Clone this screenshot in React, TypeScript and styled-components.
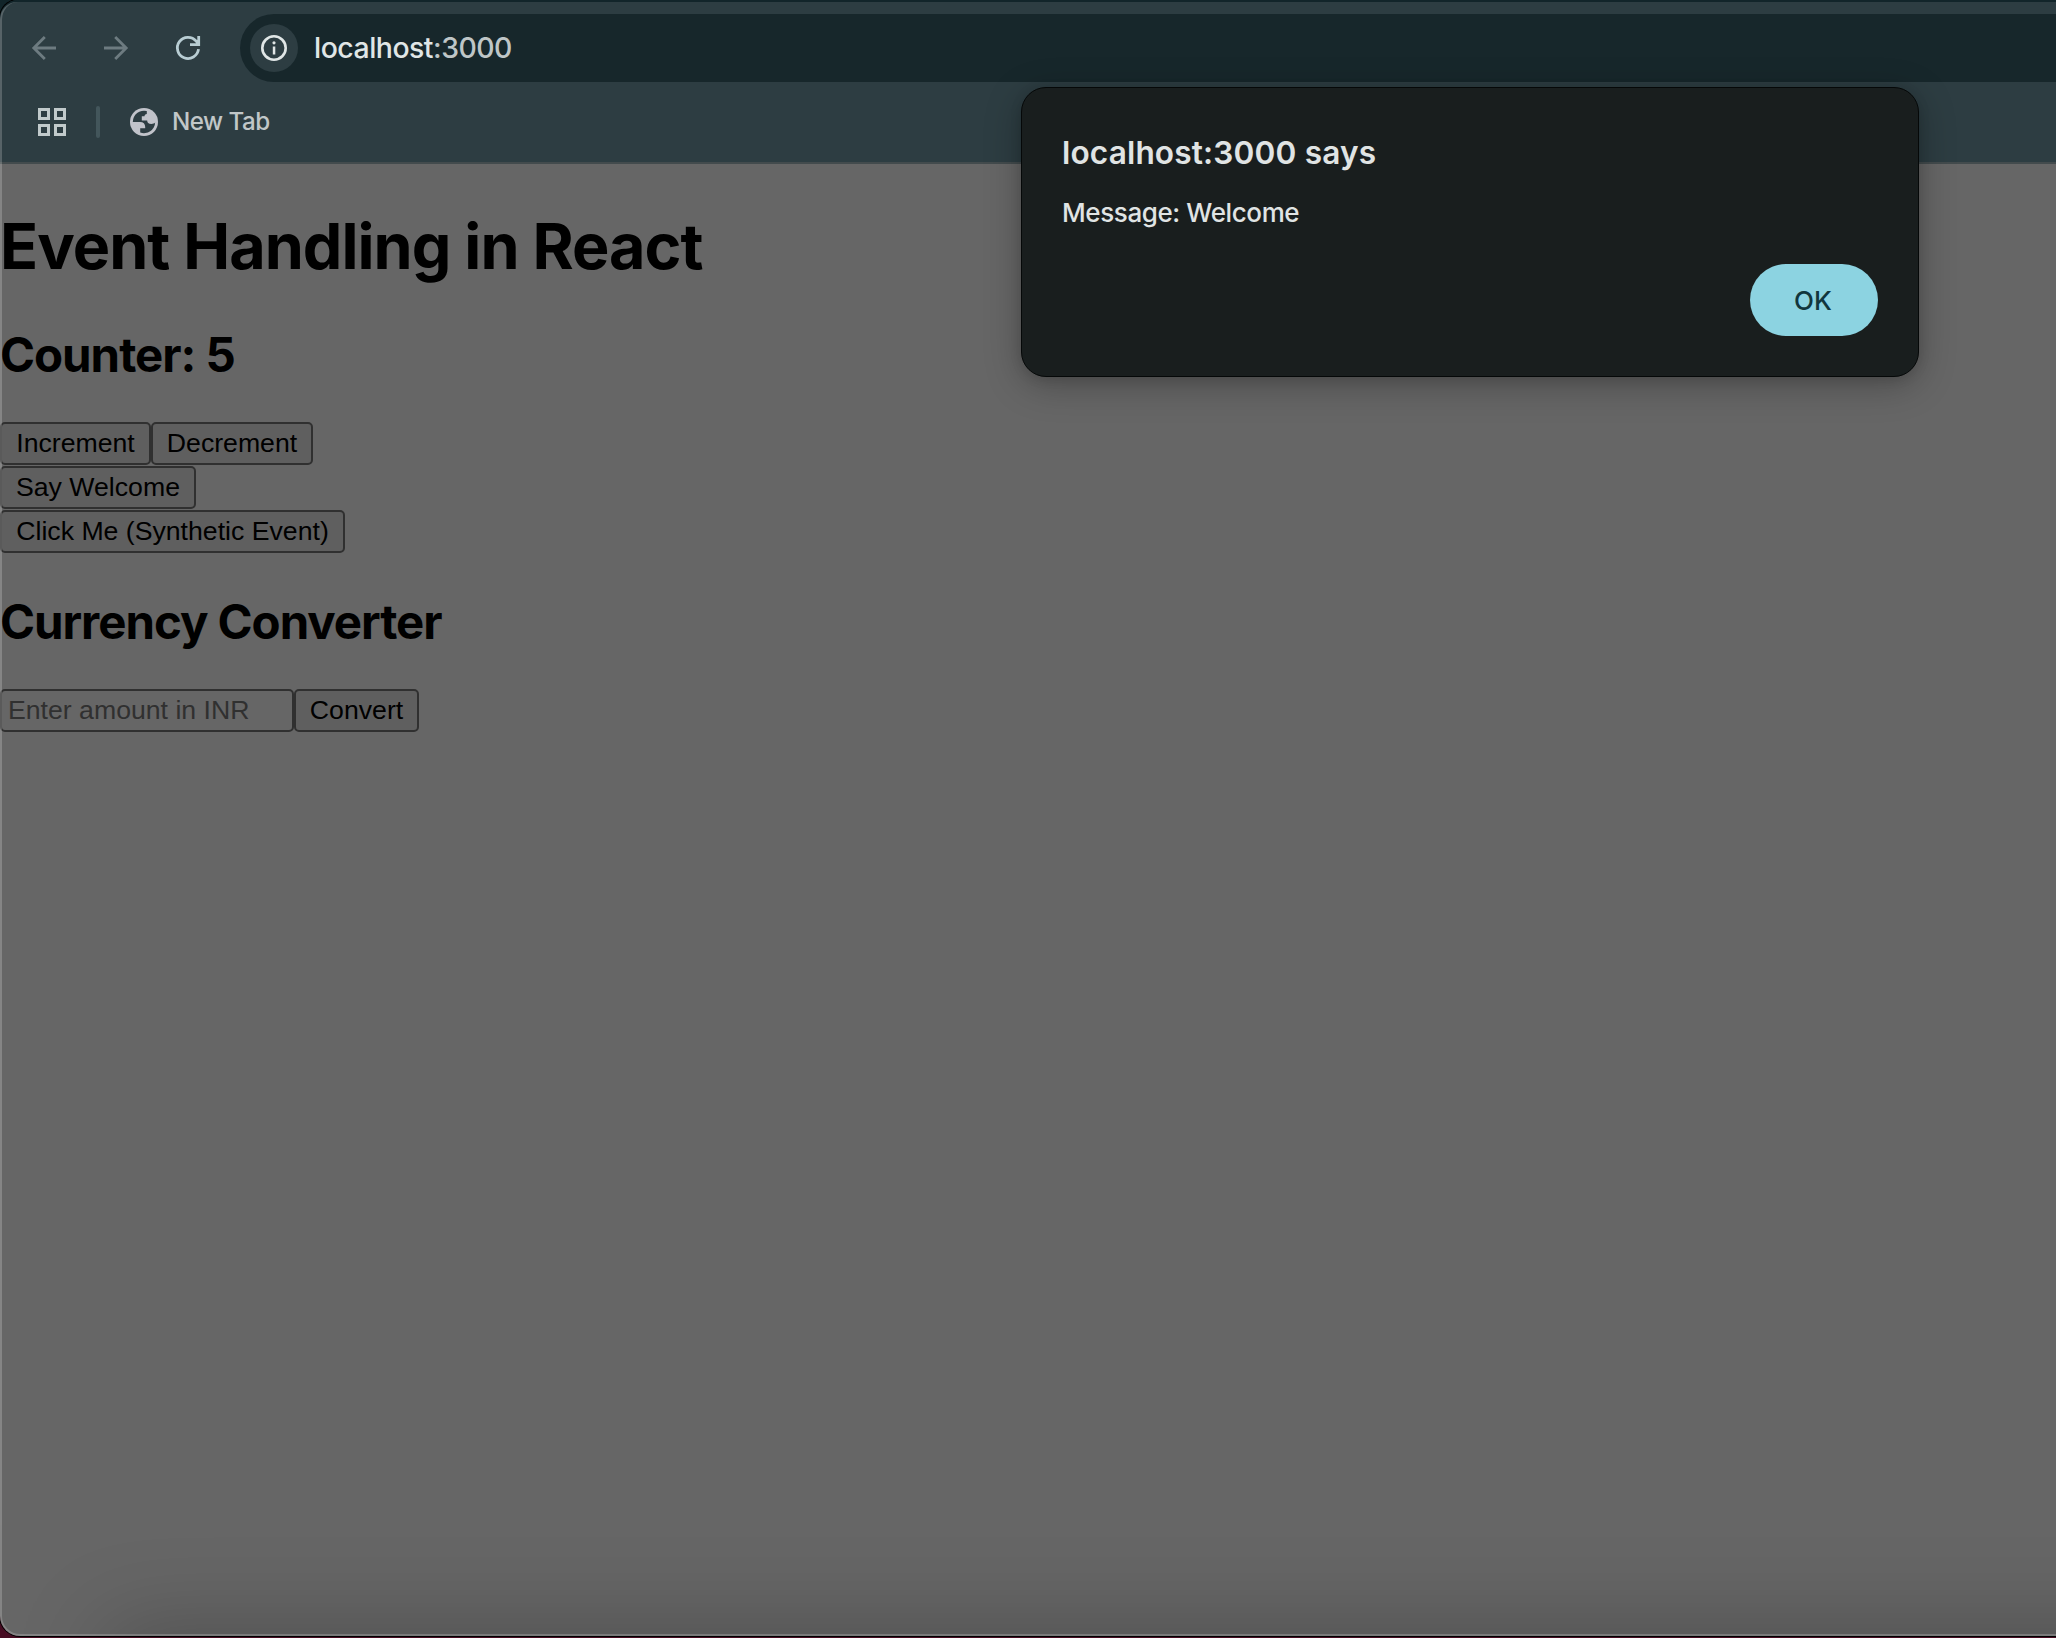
import React from "react";
import styled, { createGlobalStyle } from "styled-components";

const Global = createGlobalStyle`
  * { box-sizing: border-box; }
  html, body { margin: 0; padding: 0; background: #470c22; overflow: hidden; }
  button, input { appearance: none; margin: 0; }
`;

const Desktop = styled.div`
  position: relative;
  width: 2056px;
  height: 1638px;
  overflow: hidden;
  background: linear-gradient(#12252a 0 50%, #470c22 50%);
`;

const Window = styled.div`
  position: relative;
  display: flex;
  flex-direction: column;
  width: 100%;
  height: 1636px;
  padding-top: 2px;
  border-radius: 18px 0 0 20px;
  overflow: hidden;
  background: linear-gradient(#12252a 0 2px, transparent 2px);
  box-shadow: 0 0 0 1px #000;
`;

const WindowEdge = styled.div`
  position: absolute;
  inset: 2px -4px 0 0;
  border: 2px solid rgba(255, 255, 255, 0.2);
  border-top: 0;
  border-radius: 18px 0 0 20px;
  pointer-events: none;
`;

const Chrome = styled.header`
  height: 162px;
  background: #2d3d42;
  border-bottom: 2px solid #434b4d;
  border-top-left-radius: 16px;
  font-family: Inter, "Noto Sans", sans-serif;
`;

const Toolbar = styled.div`
  display: flex;
  align-items: center;
  height: 92px;
  padding-left: 32px;
`;

const NavIcon = styled.svg<{ $color: string; $gap: number }>`
  flex: none;
  width: 24px;
  height: 24px;
  margin-right: ${(p) => p.$gap}px;
  overflow: visible;
  fill: none;
  stroke: ${(p) => p.$color};
  stroke-width: 2.8;
`;

const AddressBar = styled.div`
  display: flex;
  align-items: center;
  flex: 1;
  height: 68px;
  padding-left: 10px;
  border-radius: 34px 0 0 34px;
  background: #17272b;
`;

const SiteInfo = styled.span`
  display: grid;
  place-items: center;
  width: 48px;
  height: 48px;
  border-radius: 50%;
  background: #2d3d42;
`;

const Url = styled.span`
  margin: 0 0 1px 16px;
  font-size: 28.4px;
  font-weight: 450;
  letter-spacing: -0.49px;
  color: #e0e6e6;
`;

const Port = styled.span`
  color: #bfc6c7;
`;

const Bookmarks = styled.nav`
  display: flex;
  align-items: center;
  height: 56px;
  padding-left: 38px;
`;

const Divider = styled.span`
  width: 4px;
  height: 32px;
  margin: 0 30px;
  border-radius: 2px;
  background: #43565b;
`;

const Bookmark = styled.span`
  display: flex;
  align-items: center;
  gap: 14px;
  font-size: 24.2px;
  font-weight: 450;
  letter-spacing: -0.5px;
  color: #c1c7c8;
`;

const BookmarkName = styled.span`
  padding-bottom: 1px;
`;

const Page = styled.main`
  position: relative;
  flex: 1;
  background: #666;
  font-family: Inter, "Liberation Sans", sans-serif;
  color: #000;
`;

const FloorShade = styled.div`
  position: absolute;
  right: -120px;
  bottom: -76px;
  left: 130px;
  height: 60px;
  box-shadow: 0 0 90px 24px rgba(0, 0, 0, 0.22);
`;

const Title = styled.h1`
  height: 74px;
  margin: 45px 0 0;
  font-size: 62.8px;
  line-height: 74px;
  font-weight: 700;
  letter-spacing: -0.96px;
`;

const Heading = styled.h2<{ $top: number; $track: number }>`
  height: 56px;
  margin: ${(p) => p.$top}px 0 39px;
  font-size: 47.4px;
  line-height: 56px;
  font-weight: 700;
  letter-spacing: ${(p) => p.$track}px;
`;

const Row = styled.div`
  display: flex;
  height: 44px;
`;

const Button = styled.button<{ $width: number }>`
  width: ${(p) => p.$width}px;
  height: 43px;
  padding: 0;
  border: 2px solid #303030;
  border-radius: 5px;
  background: #5f5f5f;
  color: #000;
  font: 26.67px "Liberation Sans", sans-serif;
  white-space: nowrap;
`;

const Amount = styled.input`
  width: 294px;
  height: 43px;
  padding: 0 0 0 6px;
  border: 2px solid #303030;
  border-radius: 5px;
  background: #666;
  font: 26.67px "Liberation Sans", sans-serif;
  &::placeholder { color: #303030; opacity: 1; }
`;

const Dialog = styled.section`
  position: absolute;
  top: 87px;
  left: 1021px;
  display: flex;
  flex-direction: column;
  width: 898px;
  height: 290px;
  padding: 45px 40px 40px;
  border: 1px solid #050808;
  border-radius: 25px;
  background: #191e1e;
  box-shadow: 0 8px 36px rgba(0, 0, 0, 0.28), 0 2px 12px rgba(0, 0, 0, 0.12);
  font-family: Inter, "Noto Sans", sans-serif;
  color: #e0e4e4;
`;

const DialogTitle = styled.div`
  height: 40px;
  font-size: 31.6px;
  line-height: 40px;
  font-weight: 600;
  letter-spacing: 0.15px;
`;

const DialogText = styled.p`
  height: 40px;
  margin: 20px 0 0;
  font-size: 26px;
  line-height: 40px;
  font-weight: 450;
  letter-spacing: -0.4px;
`;

const Confirm = styled.button`
  align-self: flex-end;
  width: 128px;
  height: 72px;
  margin-top: auto;
  padding: 0 2px 0 0;
  border: 0;
  border-radius: 36px;
  background: #8cd3e1;
  color: #11363d;
  font: 550 26px Inter, sans-serif;
`;

function InfoGlyph() {
  return (
    <svg width="26" height="26" viewBox="0 0 26 26">
      <circle cx="13" cy="13" r="11.7" fill="none" stroke="#e0e6e6" strokeWidth="2.6" />
      <circle cx="13" cy="7.8" r="1.6" fill="#e0e6e6" />
      <rect x="11.8" y="11.5" width="2.5" height="8" fill="#e0e6e6" />
    </svg>
  );
}

function AppsGlyph() {
  return (
    <svg width="28" height="28" viewBox="0 0 28 28" fill="none" stroke="#c1cacb" strokeWidth="3">
      <path d="M1.500 1.500h9v9h-9zM17.500 1.500h9v9h-9zM1.500 17.500h9v9h-9zM17.500 17.500h9v9h-9z" />
    </svg>
  );
}

function GlobeGlyph() {
  return (
    <svg width="28" height="28" viewBox="0 0 28 28">
      <circle cx="14" cy="14" r="14" fill="#c1c3ca" />
      <path
        fill="#2d3d42"
        d="M16.800 3.100A11.200 11.200 0 0 0 2.800 14H10c3.400 0 5.200 1.900 5.200 5v1.200h-5v4.300A11.200 11.200 0 0 0 25.200 14.600c-.9 1-2.200 1.300-3.800 1.300-3 0-4.200-1.200-4.200-3.400h-5.400V8.300h2.700c0-1.500.8-2.400 2.300-2.400z"
      />
    </svg>
  );
}

export default function App() {
  return (
    <Desktop>
      <Global />
      <Window>
        <Chrome>
          <Toolbar>
            <NavIcon viewBox="0 0 24 24" $color="#6d7b80" $gap={48}>
              <path d="M24 12H2M12.800 1L1.800 12l11 11" />
            </NavIcon>
            <NavIcon viewBox="0 0 24 24" $color="#6d7b80" $gap={48}>
              <path d="M0 12h22M11.200 1l11 11-11 11" />
            </NavIcon>
            <NavIcon viewBox="0 0 24 24" $color="#b8cdd3" $gap={40}>
              <path d="M22.500 13.200A10.600 10.600 0 1 1 20.200 5.200L22.500 8M22.700 0v8.700H14" />
            </NavIcon>
            <AddressBar>
              <SiteInfo>
                <InfoGlyph />
              </SiteInfo>
              <Url>
                localhost<Port>:3000</Port>
              </Url>
            </AddressBar>
          </Toolbar>
          <Bookmarks>
            <AppsGlyph />
            <Divider />
            <Bookmark>
              <GlobeGlyph />
              <BookmarkName>New Tab</BookmarkName>
            </Bookmark>
          </Bookmarks>
        </Chrome>
        <Page>
          <FloorShade />
          <Title>Event Handling in React</Title>
          <Heading $top={44} $track={-1}>Counter: 5</Heading>
          <Row>
            <Button $width={151}>Increment</Button>
            <Button $width={162}>Decrement</Button>
          </Row>
          <Row>
            <Button $width={196}>Say Welcome</Button>
          </Row>
          <Row>
            <Button $width={345}>Click Me (Synthetic Event)</Button>
          </Row>
          <Heading $top={40} $track={-1.03}>Currency Converter</Heading>
          <Row>
            <Amount placeholder="Enter amount in INR" />
            <Button $width={125}>Convert</Button>
          </Row>
        </Page>
        <WindowEdge />
      </Window>
      <Dialog role="alertdialog">
        <DialogTitle>localhost:3000 says</DialogTitle>
        <DialogText>Message: Welcome</DialogText>
        <Confirm>OK</Confirm>
      </Dialog>
    </Desktop>
  );
}
